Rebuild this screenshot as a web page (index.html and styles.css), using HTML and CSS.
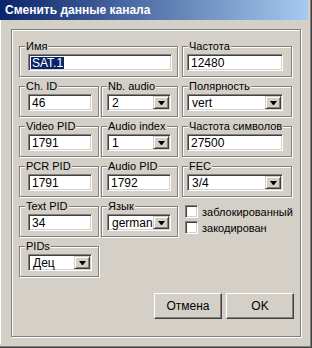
FILE: index.html
```html
<!DOCTYPE html>
<html lang="ru">
<head>
    <meta charset="UTF-8">
    <title>Сменить данные канала</title>
    <link rel="stylesheet" href="styles.css">
</head>
<body>
    <div class="window">
        <div class="titlebar">Сменить данные канала</div>
        <div class="client">
            <div class="frame">
                <div class="row">
                    <div class="group w-name">
                        <span class="cap">Имя</span>
                        <div class="field edit"><span class="sel">SAT.1</span></div>
                    </div>
                    <div class="group w3">
                        <span class="cap">Частота</span>
                        <div class="field edit">12480</div>
                    </div>
                </div>
                <div class="row">
                    <div class="group w1">
                        <span class="cap">Ch. ID</span>
                        <div class="field edit">46</div>
                    </div>
                    <div class="group w2">
                        <span class="cap">Nb. audio</span>
                        <div class="field combo"><span class="value">2</span><span class="drop"><i class="arrow"></i></span></div>
                    </div>
                    <div class="group w3">
                        <span class="cap">Полярность</span>
                        <div class="field combo"><span class="value">vert</span><span class="drop"><i class="arrow"></i></span></div>
                    </div>
                </div>
                <div class="row">
                    <div class="group w1">
                        <span class="cap">Video PID</span>
                        <div class="field edit">1791</div>
                    </div>
                    <div class="group w2">
                        <span class="cap">Audio index</span>
                        <div class="field combo"><span class="value">1</span><span class="drop"><i class="arrow"></i></span></div>
                    </div>
                    <div class="group w3">
                        <span class="cap">Частота символов</span>
                        <div class="field edit">27500</div>
                    </div>
                </div>
                <div class="row">
                    <div class="group w1">
                        <span class="cap">PCR PID</span>
                        <div class="field edit">1791</div>
                    </div>
                    <div class="group w2">
                        <span class="cap">Audio PID</span>
                        <div class="field edit">1792</div>
                    </div>
                    <div class="group w3">
                        <span class="cap">FEC</span>
                        <div class="field combo"><span class="value">3/4</span><span class="drop"><i class="arrow"></i></span></div>
                    </div>
                </div>
                <div class="row">
                    <div class="group w1">
                        <span class="cap">Text PID</span>
                        <div class="field edit">34</div>
                    </div>
                    <div class="group w2">
                        <span class="cap">Язык</span>
                        <div class="field combo"><span class="value">german</span><span class="drop"><i class="arrow"></i></span></div>
                    </div>
                    <div class="checks">
                        <label class="check"><span class="box"></span>заблокированный</label>
                        <label class="check"><span class="box"></span>закодирован</label>
                    </div>
                </div>
                <div class="row">
                    <div class="group w1">
                        <span class="cap">PIDs</span>
                        <div class="field combo"><span class="value">Дец</span><span class="drop"><i class="arrow"></i></span></div>
                    </div>
                </div>
                <div class="buttons">
                    <button class="btn">Отмена</button>
                    <button class="btn">OK</button>
                </div>
            </div>
        </div>
    </div>
</body>
</html>
```

FILE: styles.css
```css
body {
    margin: 0;
    font-family: "Liberation Sans", Arial, sans-serif;
    font-size: 12px;
    color: #000;
    background-color: #d4d0c8;
}

.window {
    width: 312px;
    height: 348px;
    box-sizing: border-box;
    padding: 0 4px 4px 0;
    background-color: #d4d0c8;
    box-shadow: inset -1px -1px 0 #404040, inset -2px -2px 0 #808080;
}

.titlebar {
    height: 20px;
    padding-left: 5px;
    line-height: 20px;
    font-size: 12px;
    font-weight: bold;
    color: #fff;
    background: linear-gradient(to right, #0a246a, #a6caf0);
}

.client {
    height: 324px;
    padding: 9px 0 0 11px;
    box-sizing: border-box;
    box-shadow: inset 1px 0 0 #fff;
}

/* etched outer frame */
.frame {
    width: 290px;
    height: 308px;
    box-sizing: border-box;
    padding: 16px 6px 0 7px;
    border: 1px solid #808080;
    box-shadow: inset 1px 1px 0 #fff, 1px 1px 0 #fff;
}

.row {
    display: flex;
    margin-bottom: 9px;
}

.group {
    height: 31px;
    box-sizing: border-box;
    border: 1px solid #808080;
    box-shadow: inset 1px 1px 0 #fff, 1px 1px 0 #fff;
    display: flex;
    flex-direction: column;
    align-items: flex-start;
}

.cap {
    height: 14px;
    line-height: 14px;
    margin: -8px 0 0 5px;
    padding: 0 1px;
    font-size: 11px;
    background-color: #d4d0c8;
    white-space: nowrap;
}

.w-name { width: 159px; }
.w1 { width: 80px; }
.w2 { width: 77px; margin-left: 2px; }
.w3 { width: 110px; margin-left: 4px; }

.field {
    height: 17px;
    margin-top: 1px;
    box-sizing: border-box;
    border: 1px solid;
    border-color: #808080 #fff #fff #808080;
    box-shadow: inset 1px 1px 0 #404040, inset -1px -1px 0 #d4d0c8;
    background-color: #fff;
}

.w-name .field { width: 144px; margin-left: 8px; }
.w1 .field { width: 64px; margin-left: 8px; }
.w2 .field { width: 64px; margin-left: 5px; }
.w3 .field { width: 96px; margin-left: 4px; }

.edit {
    padding: 1px 0 0 3px;
    line-height: 14px;
    white-space: nowrap;
}

.sel {
    display: inline-block;
    margin-left: -1px;
    padding: 0 1px;
    line-height: 12px;
    color: #fff;
    background-color: #0a246a;
}

.combo {
    display: flex;
    padding: 1px;
}

.combo .value {
    flex: 1;
    padding-left: 3px;
    line-height: 14px;
    white-space: nowrap;
}

.drop {
    flex: none;
    width: 16px;
    height: 13px;
    box-sizing: border-box;
    border: 1px solid;
    border-color: #d4d0c8 #404040 #404040 #d4d0c8;
    box-shadow: inset 1px 1px 0 #fff, inset -1px -1px 0 #808080;
    background-color: #d4d0c8;
    display: flex;
    align-items: center;
    justify-content: center;
}

.arrow {
    width: 1px;
    height: 0;
    border-top: 4px solid #000;
    border-left: 3px solid transparent;
    border-right: 3px solid transparent;
}

.checks {
    margin: -1px 0 0 7px;
    display: flex;
    flex-direction: column;
    gap: 3px;
}

.check {
    display: flex;
    align-items: center;
    gap: 4px;
    height: 13px;
    font-size: 11px;
    white-space: nowrap;
}

.box {
    flex: none;
    width: 13px;
    height: 13px;
    box-sizing: border-box;
    border: 1px solid;
    border-color: #808080 #fff #fff #808080;
    box-shadow: inset 1px 1px 0 #404040, inset -1px -1px 0 #d4d0c8;
    background-color: #fff;
}

.buttons {
    display: flex;
    justify-content: flex-end;
    gap: 4px;
    margin-top: 16px;
}

.btn {
    width: 68px;
    height: 26px;
    padding: 0;
    font-family: inherit;
    font-size: 12px;
    color: #000;
    background-color: #d4d0c8;
    border: 1px solid;
    border-color: #fff #404040 #404040 #fff;
    box-shadow: inset -1px -1px 0 #808080;
    border-radius: 0;
}
```
